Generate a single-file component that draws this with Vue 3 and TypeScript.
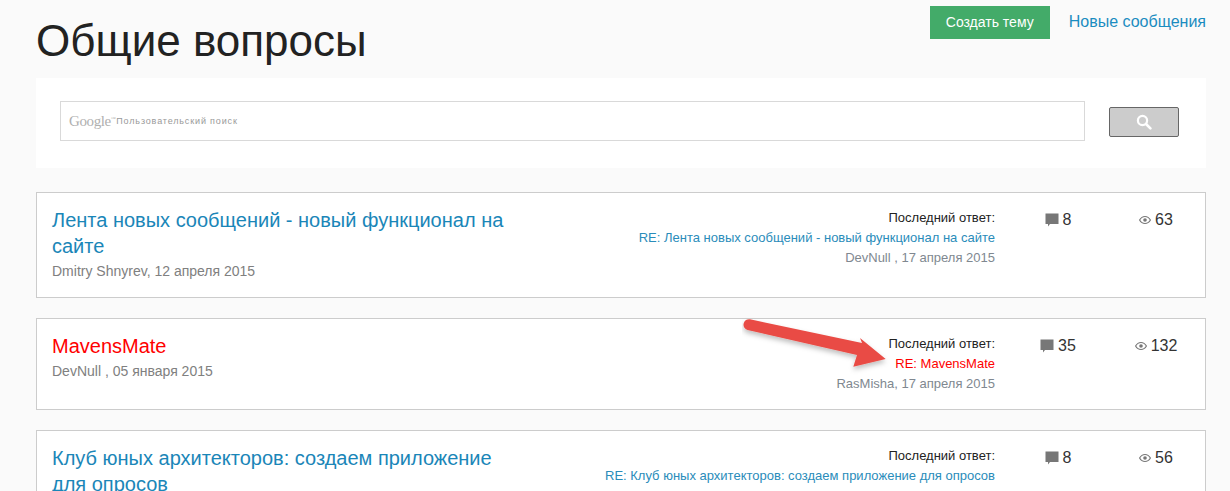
<script setup lang="ts">
interface Topic {
  title: string[];
  author: string;
  reply: string;
  replyBy: string;
  comments: number;
  views: number;
  hot?: boolean;
}
const topics: Topic[] = [
  { title: ['Лента новых сообщений - новый функционал на', 'сайте'], author: 'Dmitry Shnyrev, 12 апреля 2015', reply: 'RE: Лента новых сообщений - новый функционал на сайте', replyBy: 'DevNull , 17 апреля 2015', comments: 8, views: 63 },
  { title: ['MavensMate'], author: 'DevNull , 05 января 2015', reply: 'RE: MavensMate', replyBy: 'RasMisha, 17 апреля 2015', comments: 35, views: 132, hot: true },
  { title: ['Клуб юных архитекторов: создаем приложение', 'для опросов'], author: 'Dmitry Shnyrev, 12 апреля 2015', reply: 'RE: Клуб юных архитекторов: создаем приложение для опросов', replyBy: 'Dmitry Shnyrev, 16 апреля 2015', comments: 8, views: 56 },
];
</script>

<template>
  <div class="page">
    <header class="head">
      <h1>Общие вопросы</h1>
      <div class="actions">
        <a class="create">Создать тему</a>
        <a class="fresh">Новые сообщения</a>
      </div>
    </header>
    <section class="search">
      <div class="box">
        <span class="google">Google<sup>™</sup></span>
        <span class="hint">Пользовательский поиск</span>
      </div>
      <button class="go" aria-label="Поиск">
        <svg width="16" height="16" viewBox="0 0 16 16"><circle cx="6.5" cy="6.5" r="4.6" fill="none" stroke="#fff" stroke-width="2.2"/><path d="M10 10l4.4 4.4" stroke="#fff" stroke-width="2.6" stroke-linecap="round"/></svg>
      </button>
    </section>
    <article v-for="t in topics" :key="t.reply" class="card" :class="{ hot: t.hot, two: t.title.length > 1 }">
      <div class="main">
        <h2><span v-for="line in t.title" :key="line">{{ line }}</span></h2>
        <p class="author">{{ t.author }}</p>
      </div>
      <div class="last">
        <p class="label">Последний ответ:</p>
        <p class="reply">{{ t.reply }}</p>
        <p class="by">{{ t.replyBy }}</p>
      </div>
      <div class="stat comments">
        <svg width="14" height="14" viewBox="0 0 14 14"><path d="M0.5 .5h13v10.5H5l-2 2.5v-2.5H0.5z" fill="#777"/></svg>
        <span>{{ t.comments }}</span>
      </div>
      <div class="stat views">
        <svg width="12" height="10" viewBox="0 0 12 10"><path d="M0.6 5C2 2.6 4 1.5 6 1.5S10 2.6 11.4 5C10 7.4 8 8.5 6 8.5S2 7.4 .6 5z" fill="none" stroke="#777" stroke-width="1.2"/><circle cx="6" cy="5" r="1.8" fill="#777"/></svg>
        <span>{{ t.views }}</span>
      </div>
    </article>
    <svg class="arrow" width="160" height="64" viewBox="0 0 160 64" aria-hidden="true">
      <defs><filter id="sh" x="-20%" y="-30%" width="140%" height="170%"><feDropShadow dx="0" dy="3" stdDeviation="2.5" flood-color="#000" flood-opacity=".25"/></filter></defs>
      <path d="M8 3.3 L120 27 L118 22 L143.7 43 L111.3 50.7 L115 39 L5.5 14 A5.5 5.5 0 0 1 8 3.3Z" fill="#e94c45" filter="url(#sh)"/>
    </svg>
  </div>
</template>

<style>
html, body { margin: 0; background: #fafafa; }
</style>

<style scoped>
.page {
  position: relative;
  height: 491px;
  overflow: hidden;
  padding: 0 24px 0 36px;
  font-family: "Liberation Sans", Arial, sans-serif;
  background: #fafafa;
  box-sizing: border-box;
}
p, h1, h2 { margin: 0; font-weight: 400; }
.head { display: flex; justify-content: space-between; height: 78px; }
h1 { font-size: 44px; line-height: 53px; color: #222; padding-top: 14px; }
.actions { display: flex; align-items: flex-start; gap: 19px; padding-top: 6px; }
.create {
  width: 120px; height: 33px; background: #43ab69; color: #fff; font-size: 14px;
  display: flex; align-items: center; justify-content: center; padding-bottom: 1px; box-sizing: border-box;
}
.fresh { color: #1a8cc0; font-size: 16px; line-height: 32px; }
.search {
  height: 90px; background: #fff; display: flex; align-items: center;
  padding: 0 27px 0 24px; gap: 24px; box-sizing: border-box; margin-bottom: 24px;
}
.box {
  flex: 1; height: 40px; border: 1px solid #d9d9d9; box-sizing: border-box;
  display: flex; align-items: center; padding-left: 8px; gap: 1px; position: relative; top: -2px;
}
.google { font-family: "Liberation Serif", serif; font-size: 15px; color: #b0b0b0; letter-spacing: -.4px; }
.google sup { font-size: 5px; vertical-align: 6px; }
.hint { font-size: 9px; color: #999; letter-spacing: .85px; }
.go {
  width: 70px; height: 30px; background: #ccc; border: 1px solid #666; border-radius: 2px;
  padding: 0; display: flex; align-items: center; justify-content: center; box-sizing: border-box;
  position: relative; top: -1px;
}
.card {
  display: flex; background: #fff; border: 1px solid #ccc; box-sizing: border-box;
  height: 92px; margin-bottom: 20px; padding-left: 15px; color: #222;
}
.card.two { height: 106px; }
.main { width: 480px; padding-top: 14px; }
h2 { font-size: 20px; line-height: 26px; color: #1a86b8; }
h2 span { display: block; }
.hot h2, .hot .reply { color: #f00; }
.author { font-size: 14px; line-height: 20px; color: #808080; margin-top: 2px; }
.last { width: 463px; text-align: right; font-size: 13px; padding-top: 16px; }
.label { line-height: 18px; color: #222; }
.reply { line-height: 18px; margin-top: 2px; color: #2a8cba; }
.by { line-height: 18px; margin-top: 2px; color: #808890; }
.stat {
  display: flex; align-items: center; justify-content: center; gap: 4px;
  height: 20px; margin-top: 17px; font-size: 16px; color: #333;
}
.comments { width: 126px; }
.views { width: 70px; }
.arrow { position: absolute; left: 742px; top: 316px; }
</style>
